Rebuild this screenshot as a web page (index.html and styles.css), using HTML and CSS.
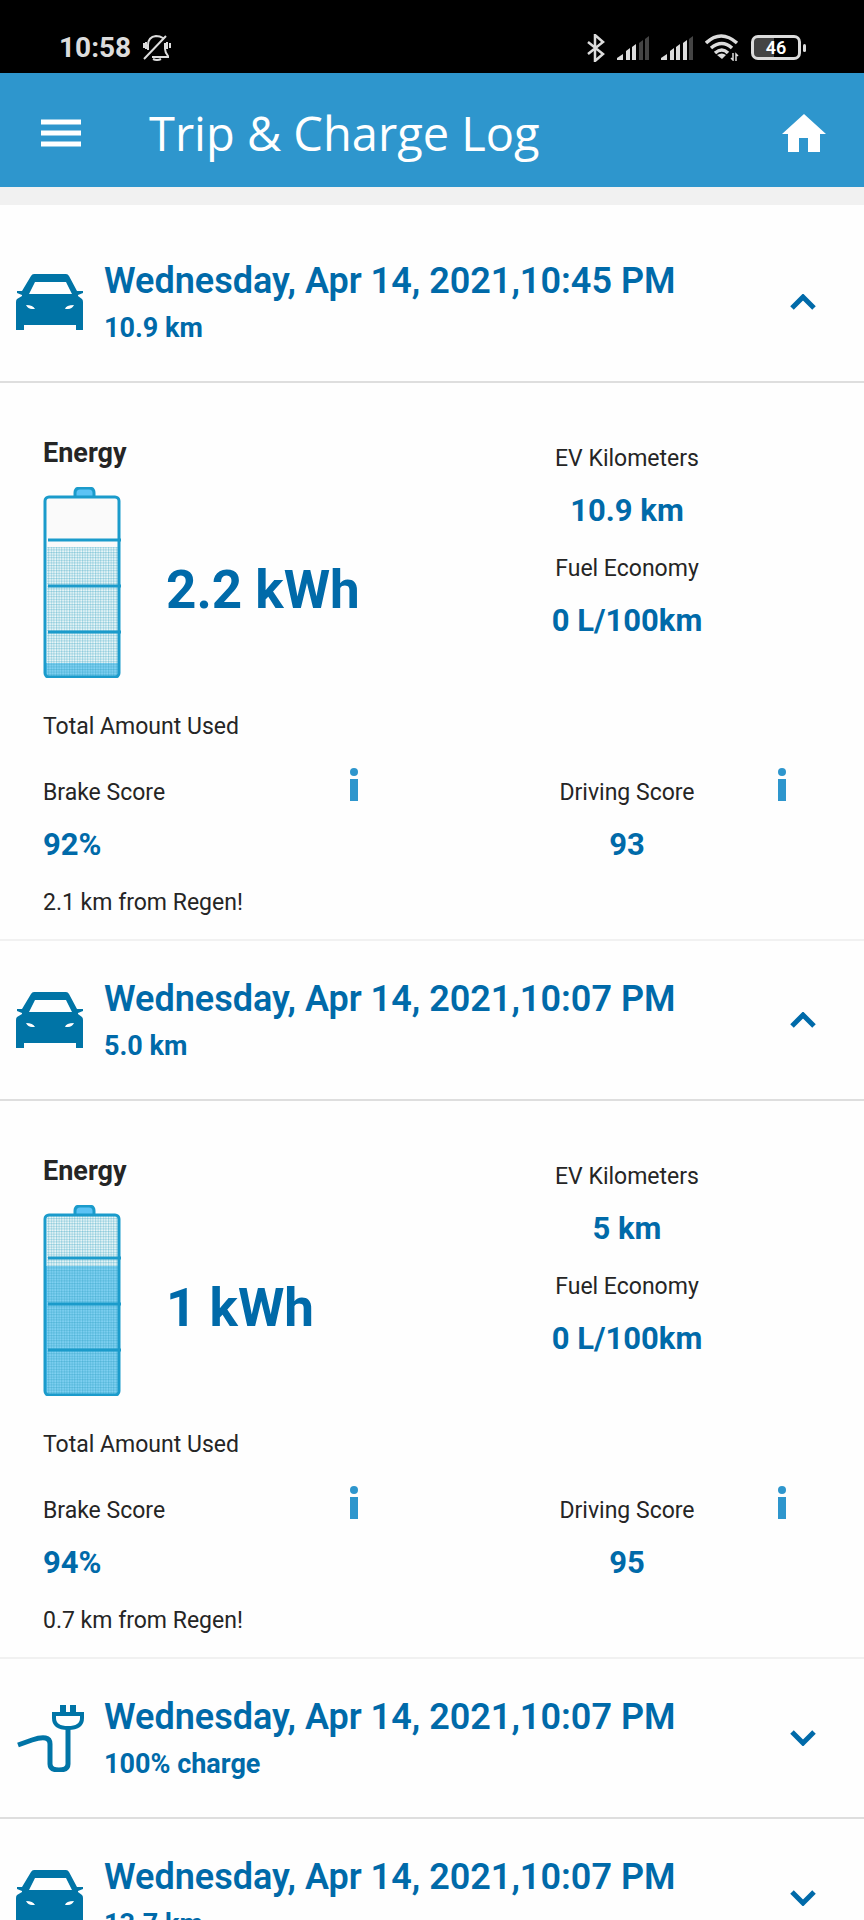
FILE: index.html
```html
<!DOCTYPE html>
<html lang="en">
<head>
    <meta charset="UTF-8">
    <meta name="viewport" content="width=device-width, initial-scale=1.0">
    <title>Trip &amp; Charge Log</title>
    <link rel="stylesheet" href="styles.css">
</head>
<body>
    <!-- Shared icons -->
    <svg class="sprite" aria-hidden="true">
        <defs>
            <pattern id="mesh" width="2.6" height="2.6" patternUnits="userSpaceOnUse">
                <rect width="2.6" height="2.6" fill="#d9f6fb" fill-opacity="0.3"/>
                <path d="M0 0.6h2.6M0.6 0v2.6" stroke="#1b94bc" stroke-width="0.8" stroke-opacity="0.4"/>
            </pattern>
        </defs>
        <symbol id="car" viewBox="0 0 68 56">
            <path fill-rule="evenodd" d="M18 0h32q2 0 3 2l8 15 6 0v2l-5 2 0 1 4 3q1 1 1 3v28h-7v-5H8v5H0V28q0-2 1-3l5-3v-1l-5-2v-2l5 0L15 2q1-2 3-2zM19 8l-6 12h43L50 8zM10 31q2 4 6 4h3q-2-4-9-4zM58 31q-8 0-9 4h3q4 0 6-4z"/>
        </symbol>
        <symbol id="plug" viewBox="0 0 68 68">
            <path d="M47 1v8M57 1v8" fill="none" stroke="currentColor" stroke-width="6"/>
            <path d="M38 10h28v4q0 10-14 10T38 14z" fill="none" stroke="currentColor" stroke-width="4"/>
            <path d="M2 41l14-5q18-6 18 4v20q0 6 9 6t9-6V25" fill="none" stroke="currentColor" stroke-width="5"/>
        </symbol>
        <symbol id="chevron" viewBox="0 0 26 16">
            <path d="M2 14L13 3l11 11" fill="none" stroke="currentColor" stroke-width="5"/>
        </symbol>
        <symbol id="info" viewBox="0 0 8 34">
            <circle cx="4" cy="4" r="4"/>
            <path d="M0 11h8v22H0z"/>
        </symbol>
        <symbol id="signal" viewBox="0 0 32 24">
            <path d="M0 24v-2l6-4v6zM9 24v-9l4-3v12zM15 24V11l4-3v16z"/>
        </symbol>
        <symbol id="cell" viewBox="0 0 78 191">
            <path d="M32 10V6q0-5 5-5h9q5 0 5 5v4" fill="#5cc3f5" stroke="#1b9bcb" stroke-width="3"/>
            <rect x="2" y="10" width="74" height="180" rx="4" fill="none" stroke="#1b9bcb" stroke-width="3"/>
            <path d="M5 53h73M5 99h73M5 145h73" stroke="#1b9bcb" stroke-width="3"/>
        </symbol>
    </svg>

    <div class="status-bar">
        <span class="clock">10:58</span>
        <svg class="bell" viewBox="0 0 28 26" fill="none" stroke="currentColor" stroke-width="2">
            <path d="M5 15V10q0-8 8-9 4 0 7 2M22 8v6q0 3 3 7v1H9M10 24q4 2 8 0M1 24L23 1M1 8v5M3 7v7M27 8v5M24 7v7"/>
        </svg>
        <svg class="bluetooth" viewBox="0 0 18 28" fill="none" stroke="currentColor" stroke-width="2.500">
            <path d="M1 8l15 12-8 7V1l8 7L1 20"/>
        </svg>
        <svg class="signal" viewBox="0 0 32 24" fill="currentColor">
            <use href="#signal"/>
            <path class="dim" d="M22 24V7l4-3v20zM28 24V3l4-3v24z"/>
        </svg>
        <svg class="signal" viewBox="0 0 32 24" fill="currentColor">
            <use href="#signal"/>
            <path d="M22 24V7l4-3v20z"/>
            <path class="dim" d="M28 24V3l4-3v24z"/>
        </svg>
        <svg class="wifi" viewBox="0 0 34 27" fill="none" stroke="currentColor" stroke-width="3.500">
            <path d="M1 9q15-14 31 0M6 14q11-9 21 0M10 19q7-6 13 0"/>
            <path d="M12 21q5-3 9 0l-4 4z" fill="currentColor" stroke="none"/>
            <path d="M28 19v7l-2-2M31 27v-7l2 2" stroke-width="1.500"/>
        </svg>
        <span class="phone-battery"><span class="phone-battery-level">46</span></span>
    </div>

    <header>
        <button class="icon-button" type="button" aria-label="Menu">
            <svg class="menu-icon" viewBox="0 0 40 28"><path d="M0 3h40M0 14h40M0 25h40" stroke="currentColor" stroke-width="5"/></svg>
        </button>
        <h1>Trip &amp; Charge Log</h1>
        <a class="icon-button" href="#" aria-label="Home">
            <svg class="home-icon" viewBox="0 0 44 38"><path d="M22 0l22 20h-6v18H26V24h-9v14H6V20H0z" fill="currentColor"/></svg>
        </a>
    </header>

    <main>
        <details class="entry" open>
            <summary>
                <svg class="entry-icon car"><use href="#car"/></svg>
                <span class="entry-title">
                    <span class="date">Wednesday, Apr 14, 2021,10:45 PM</span>
                    <span class="summary-value">10.9 km</span>
                </span>
                <svg class="chevron"><use href="#chevron"/></svg>
            </summary>
            <div class="trip">
                <section class="energy">
                    <h2>Energy</h2>
                    <div class="usage">
                        <svg class="battery" viewBox="0 0 78 191">
                            <rect x="2" y="10" width="74" height="180" rx="4" fill="#fafafa"/>
                            <rect x="3" y="176" width="72" height="13" fill="#5fc3f2"/>
                            <rect x="4" y="60" width="71" height="129" fill="url(#mesh)"/>
                            <use href="#cell"/>
                        </svg>
                        <span class="kwh">2.2 kWh</span>
                    </div>
                    <p class="label">Total Amount Used</p>
                </section>
                <section class="stats">
                    <p class="label">EV Kilometers</p>
                    <p class="value">10.9 km</p>
                    <p class="label">Fuel Economy</p>
                    <p class="value">0 L/100km</p>
                </section>
                <section class="score">
                    <div class="score-text">
                        <p class="label">Brake Score</p>
                        <p class="value">92%</p>
                        <p class="label">2.1 km from Regen!</p>
                    </div>
                    <button class="info" type="button" aria-label="About brake score"><svg><use href="#info"/></svg></button>
                </section>
                <section class="score centered">
                    <div class="score-text">
                        <p class="label">Driving Score</p>
                        <p class="value">93</p>
                    </div>
                    <button class="info" type="button" aria-label="About driving score"><svg><use href="#info"/></svg></button>
                </section>
            </div>
        </details>

        <details class="entry" open>
            <summary>
                <svg class="entry-icon car"><use href="#car"/></svg>
                <span class="entry-title">
                    <span class="date">Wednesday, Apr 14, 2021,10:07 PM</span>
                    <span class="summary-value">5.0 km</span>
                </span>
                <svg class="chevron"><use href="#chevron"/></svg>
            </summary>
            <div class="trip">
                <section class="energy">
                    <h2>Energy</h2>
                    <div class="usage">
                        <svg class="battery" viewBox="0 0 78 191">
                            <rect x="2" y="10" width="74" height="180" rx="4" fill="#fafafa"/>
                            <rect x="3" y="61" width="72" height="128" fill="#5fc3f2"/>
                            <rect x="4" y="11" width="71" height="178" fill="url(#mesh)"/>
                            <use href="#cell"/>
                        </svg>
                        <span class="kwh">1 kWh</span>
                    </div>
                    <p class="label">Total Amount Used</p>
                </section>
                <section class="stats">
                    <p class="label">EV Kilometers</p>
                    <p class="value">5 km</p>
                    <p class="label">Fuel Economy</p>
                    <p class="value">0 L/100km</p>
                </section>
                <section class="score">
                    <div class="score-text">
                        <p class="label">Brake Score</p>
                        <p class="value">94%</p>
                        <p class="label">0.7 km from Regen!</p>
                    </div>
                    <button class="info" type="button" aria-label="About brake score"><svg><use href="#info"/></svg></button>
                </section>
                <section class="score centered">
                    <div class="score-text">
                        <p class="label">Driving Score</p>
                        <p class="value">95</p>
                    </div>
                    <button class="info" type="button" aria-label="About driving score"><svg><use href="#info"/></svg></button>
                </section>
            </div>
        </details>

        <details class="entry">
            <summary>
                <svg class="entry-icon plug"><use href="#plug"/></svg>
                <span class="entry-title">
                    <span class="date">Wednesday, Apr 14, 2021,10:07 PM</span>
                    <span class="summary-value">100% charge</span>
                </span>
                <svg class="chevron"><use href="#chevron"/></svg>
            </summary>
        </details>

        <details class="entry">
            <summary>
                <svg class="entry-icon car"><use href="#car"/></svg>
                <span class="entry-title">
                    <span class="date">Wednesday, Apr 14, 2021,10:07 PM</span>
                    <span class="summary-value">13.7 km</span>
                </span>
                <svg class="chevron"><use href="#chevron"/></svg>
            </summary>
        </details>
    </main>
</body>
</html>
```

FILE: styles.css
```css
:root {
    --bar-color: #2e96cd;
    --primary-color: #006aa9;
    --icon-color: #0074a6;
    --text-color: #252525;
    --status-color: #dcdcdc;
}

* {
    margin: 0;
    padding: 0;
    box-sizing: border-box;
}

body {
    font-family: Roboto, 'Liberation Sans', sans-serif;
    color: var(--text-color);
    background-color: #fefefe;
}

button {
    border: none;
    background: none;
    color: inherit;
    cursor: pointer;
}

svg {
    display: block;
    flex-shrink: 0;
}

.sprite {
    position: absolute;
    width: 0;
    height: 0;
}

/* Phone status bar */
.status-bar {
    display: flex;
    align-items: center;
    gap: 12px;
    padding: 22px 63px 0 59px;
    height: 73px;
    background-color: #000;
    color: var(--status-color);
}

.clock {
    font-size: 28px;
    font-weight: 700;
    line-height: 32px;
}

.bell {
    width: 28px;
    height: 26px;
    margin-right: auto;
}

.bluetooth {
    width: 18px;
    height: 28px;
}

.signal {
    width: 32px;
    height: 24px;
}

.signal .dim {
    fill: #444;
}

.wifi {
    width: 34px;
    height: 27px;
}

.phone-battery {
    position: relative;
    width: 50px;
    height: 25px;
    border: 3px solid var(--status-color);
    border-radius: 7px;
    background: linear-gradient(to right, #444 45%, #000 45%);
}

.phone-battery::after {
    content: "";
    position: absolute;
    top: 6px;
    right: -8px;
    width: 3px;
    height: 8px;
    border-radius: 2px;
    background-color: var(--status-color);
}

.phone-battery-level {
    display: block;
    color: #fff;
    font-size: 18px;
    font-weight: 600;
    line-height: 20px;
    text-align: center;
}

/* App bar */
header {
    display: flex;
    align-items: center;
    height: 114px;
    padding: 6px 28px 0 29px;
    background-color: var(--bar-color);
    color: #fff;
}

h1 {
    flex-grow: 1;
    margin-left: 56px;
    font-family: 'Open Sans', 'Noto Sans', sans-serif;
    font-size: 47px;
    font-weight: 500;
    line-height: 60px;
}

.icon-button {
    display: flex;
    align-items: center;
    justify-content: center;
    width: 64px;
    height: 64px;
    color: #fff;
}

.menu-icon {
    width: 40px;
    height: 28px;
}

.home-icon {
    width: 44px;
    height: 38px;
}

/* Log entries */
main {
    border-top: 18px solid #f1f1f1;
    padding-top: 18px;
}

summary {
    display: flex;
    align-items: center;
    padding: 32px 48px 33px 16px;
    border-bottom: 2px solid #dedede;
    color: var(--primary-color);
    list-style: none;
    cursor: pointer;
}

.entry-icon {
    width: 68px;
    margin-right: 20px;
    color: var(--icon-color);
    fill: currentColor;
}

.entry-icon.car {
    height: 56px;
}

.entry-icon.plug {
    height: 68px;
}

.entry-title {
    display: flex;
    flex-direction: column;
    flex-grow: 1;
    gap: 5px;
    padding-top: 4px;
}

.date {
    font-size: 36px;
    font-weight: 600;
    line-height: 44px;
}

.summary-value {
    font-size: 27px;
    font-weight: 700;
    line-height: 40px;
}

.chevron {
    width: 26px;
    height: 16px;
    transform: rotate(180deg);
}

.entry[open] .chevron {
    transform: none;
}

/* Trip details */
.trip {
    display: grid;
    grid-template-columns: 1fr 1fr;
    row-gap: 16px;
    padding: 51px 0 11px;
    border-bottom: 2px solid #f1f1f1;
}

.energy,
.score {
    padding: 0 58px 0 43px;
}

.stats,
.score.centered {
    padding: 0 62px 0 60px;
    text-align: center;
}

.stats {
    padding-right: 102px;
}

h2 {
    font-size: 27px;
    font-weight: 700;
    line-height: 38px;
}

.usage {
    display: flex;
    align-items: center;
    gap: 45px;
    margin: 15px 0 24px;
}

.battery {
    width: 78px;
    height: 191px;
}

.kwh {
    padding-top: 14px;
    color: var(--primary-color);
    font-size: 53px;
    font-weight: 700;
    line-height: 64px;
}

.label {
    font-size: 23px;
    line-height: 50px;
}

.value {
    margin-bottom: 6px;
    color: var(--primary-color);
    font-size: 31px;
    font-weight: 700;
    line-height: 54px;
}

.score {
    display: flex;
    align-items: flex-start;
}

.score-text {
    flex-grow: 1;
}

.info {
    display: flex;
    justify-content: center;
    width: 40px;
}

.info svg {
    width: 8px;
    height: 34px;
    fill: var(--bar-color);
}
```
